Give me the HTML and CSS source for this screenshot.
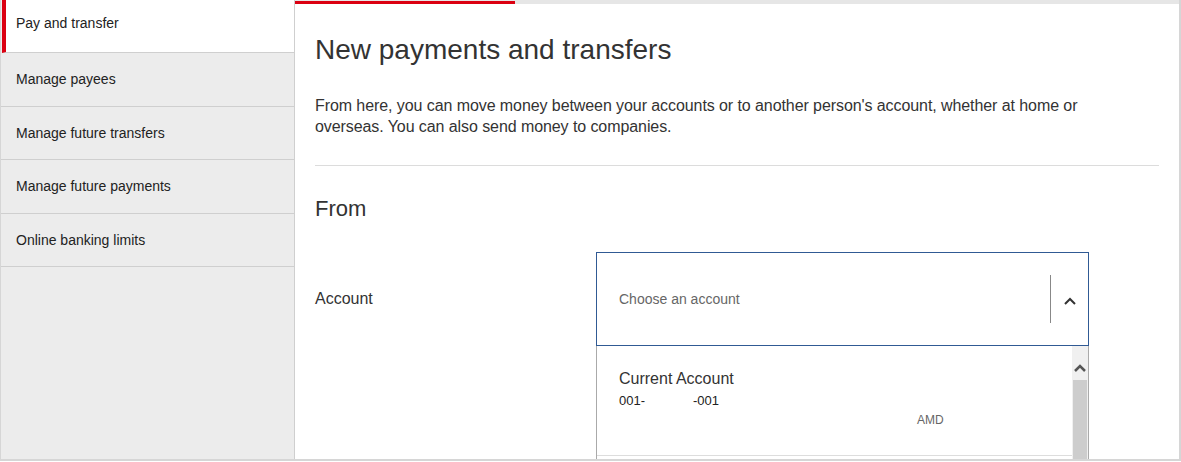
FILE: index.html
```html
<!DOCTYPE html>
<html lang="en">
<head>
  <meta charset="UTF-8">
  <meta name="viewport" content="width=device-width, initial-scale=1.0">
  <title>New payments and transfers</title>
  <link rel="stylesheet" href="styles.css">
</head>
<body>
  <div class="frame">
    <aside class="sidebar">
      <a href="#" class="side-item active">Pay and transfer</a>
      <a href="#" class="side-item">Manage payees</a>
      <a href="#" class="side-item">Manage future transfers</a>
      <a href="#" class="side-item">Manage future payments</a>
      <a href="#" class="side-item">Online banking limits</a>
    </aside>

    <main class="main">
      <div class="progress"><div class="progress-fill"></div></div>

      <div class="content">
        <h1>New payments and transfers</h1>
        <p class="intro">From here, you can move money between your accounts or to another person's account, whether at home or overseas. You can also send money to companies.</p>
        <hr class="divider">

        <h2>From</h2>

        <div class="field">
          <label class="field-label">Account</label>
          <div class="select">
            <div class="select-box">
              <span class="placeholder">Choose an account</span>
              <span class="select-sep"></span>
              <svg class="chevron" width="14" height="10" viewBox="0 0 14 10">
                <path d="M2 8 L7 3 L12 8" fill="none" stroke="#333" stroke-width="2"/>
              </svg>
            </div>
            <div class="select-list">
              <div class="options">
                <div class="option">
                  <div class="opt-name">Current Account</div>
                  <div class="opt-number">001-<span class="gap"></span>-001</div>
                  <div class="opt-currency">AMD</div>
                </div>
              </div>
              <div class="scrollbar">
                <div class="scroll-up">
                  <svg width="12" height="8" viewBox="0 0 12 8">
                    <path d="M1 7 L6 2 L11 7" fill="none" stroke="#555" stroke-width="2.5"/>
                  </svg>
                </div>
                <div class="scroll-thumb"></div>
              </div>
            </div>
          </div>
        </div>
      </div>
    </main>
  </div>
</body>
</html>
```

FILE: styles.css
```css
body {
  margin: 0;
  font-family: "Liberation Sans", Arial, sans-serif;
  color: #333;
  background-color: #fff;
}
.frame {
  width: 1181px;
  height: 461px;
  box-sizing: border-box;
  border-left: 1px solid #d6d6d6;
  border-right: 2px solid #d6d6d6;
  border-bottom: 2px solid #d6d6d6;
  display: flex;
  overflow: hidden;
}
.sidebar {
  width: 293px;
  flex-shrink: 0;
  background-color: #ececec;
  border-right: 1px solid #cfcfcf;
  display: flex;
  flex-direction: column;
}
.side-item {
  display: flex;
  align-items: center;
  height: 52.5px;
  padding-left: 15px;
  border-bottom: 1px solid #cfcfcf;
  color: #222;
  font-size: 14px;
  text-decoration: none;
}
.side-item.active {
  background-color: #fff;
  border-left: 4px solid #db0011;
  margin-left: 1px;
  padding-left: 10px;
  padding-bottom: 6px;
  height: 46px;
}
.main {
  flex: 1;
  display: flex;
  flex-direction: column;
}
.progress {
  height: 4px;
  background-color: #e6e6e6;
  margin-right: -2px;
}
.progress-fill {
  width: 220px;
  height: 3px;
  margin-top: 1px;
  background-color: #db0011;
}
.content {
  padding: 0 20px 0 20px;
}
h1 {
  font-size: 28px;
  font-weight: normal;
  margin: 30px 0 0;
  line-height: 32px;
}
.intro {
  font-size: 16px;
  line-height: 21px;
  letter-spacing: -0.08px;
  margin: 29px 0 0;
  max-width: 820px;
}
.divider {
  border: none;
  border-top: 1px solid #dcdcdc;
  margin: 28px 0 0;
}
h2 {
  font-size: 22px;
  font-weight: normal;
  margin: 30px 0 0;
  line-height: 26px;
}
.field {
  display: flex;
  margin-top: 30px;
}
.field-label {
  width: 281px;
  font-size: 16px;
  line-height: 94px;
  align-self: flex-start;
}
.select {
  width: 493px;
}
.select-box {
  height: 92px;
  border: 1px solid #305a94;
  display: flex;
  align-items: center;
  padding-left: 22px;
}
.placeholder {
  flex: 1;
  font-size: 14px;
  color: #666;
}
.select-sep {
  width: 1px;
  height: 48px;
  background-color: #888;
}
.chevron {
  margin: 4px 11px 0 12px;
}
.select-list {
  display: flex;
  border-left: 1px solid #aaa;
  border-right: 1px solid #aaa;
  height: 120px;
}
.options {
  flex: 1;
}
.option {
  padding: 23px 0 0 22px;
  height: 86px;
  border-bottom: 1px solid #ddd;
}
.opt-name {
  font-size: 16px;
  line-height: 20px;
}
.opt-number {
  font-size: 13px;
  line-height: 18px;
  margin-top: 3px;
  color: #222;
}
.gap {
  display: inline-block;
  width: 48px;
}
.opt-currency {
  font-size: 12px;
  color: #666;
  line-height: 16px;
  margin: 2px 0 0 298px;
}
.scrollbar {
  width: 16px;
  background-color: #f0f0f0;
  display: flex;
  flex-direction: column;
}
.scroll-up {
  height: 24px;
  padding-top: 10px;
  display: flex;
  align-items: center;
  justify-content: center;
}
.scroll-thumb {
  flex: 1;
  background-color: #cdcdcd;
  margin: 0 1px;
}
```
